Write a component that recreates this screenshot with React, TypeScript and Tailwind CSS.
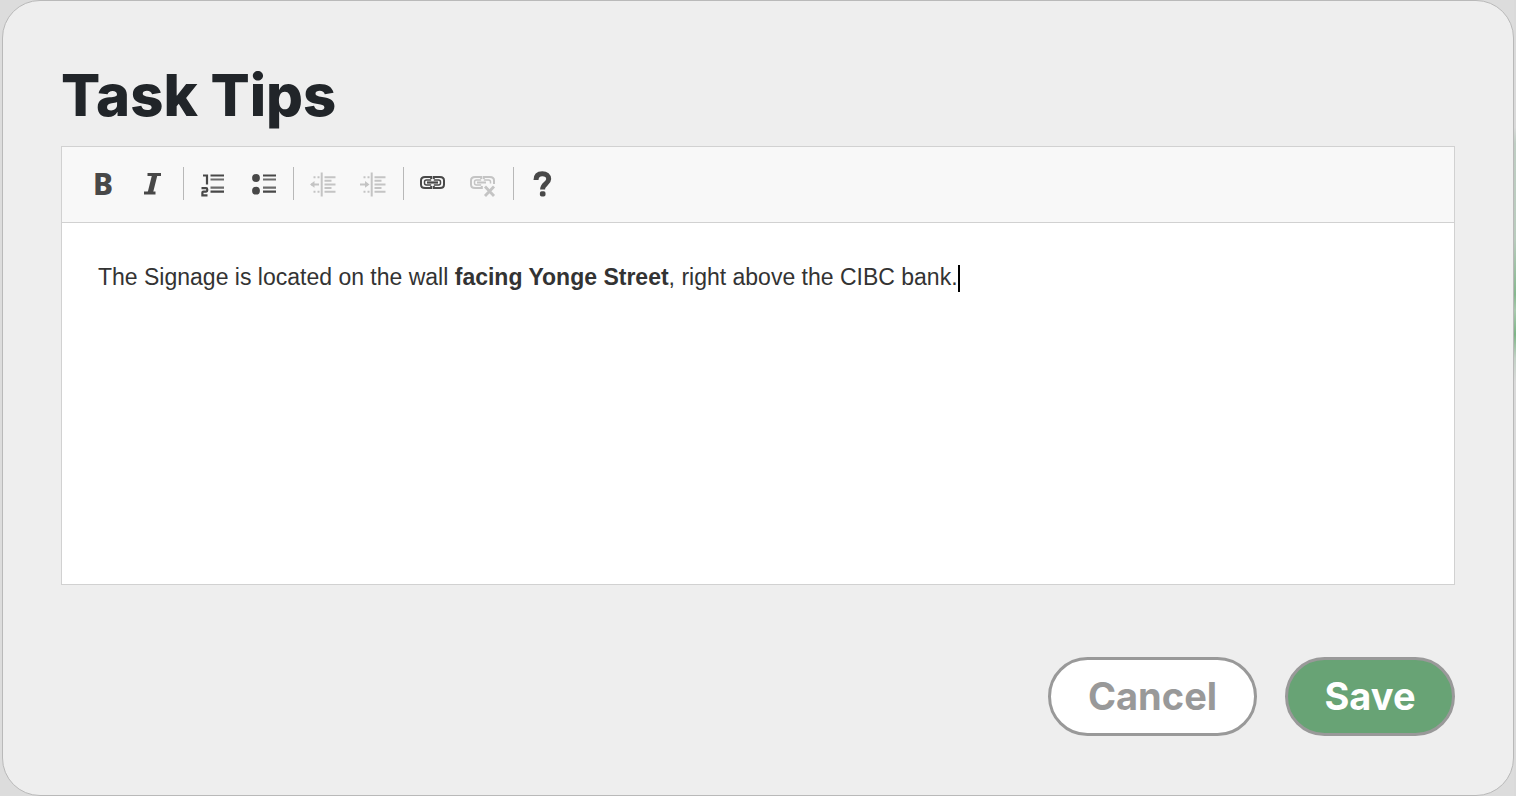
import type { ReactNode } from "react";

type ToolProps = { label: string; disabled?: boolean; children: ReactNode };

function Tool({ label, disabled, children }: ToolProps) {
  return (
    <button
      type="button"
      aria-label={label}
      title={label}
      disabled={disabled}
      className="flex h-8 w-[50px] items-center justify-center text-[#484848] disabled:text-[#c4c4c4]"
    >
      {children}
    </button>
  );
}

function Icon({ children }: { children: ReactNode }) {
  return (
    <svg viewBox="0 0 32 32" className="size-8" fill="none" stroke="currentColor" strokeWidth="2" aria-hidden="true">
      {children}
    </svg>
  );
}

function Separator() {
  return <span role="separator" className="mr-1 ml-[5px] h-[33px] w-px bg-[#b8b8b8]" />;
}

function Toolbar() {
  return (
    <div role="toolbar" aria-label="Formatting" className="flex h-[76px] items-center border-b border-[#d1d1d1] bg-[#f8f8f8] px-4 pb-0.5">
      <Tool label="Bold">
        <span className="font-['Noto_Sans',sans-serif] text-[30px] leading-8 font-extrabold">B</span>
      </Tool>
      <Tool label="Italic">
        <Icon>
          <path d="M10.500 6.500h13.500M7 25h11.500" strokeWidth="3" />
          <path d="M17.700 7l-4.500 18" strokeWidth="5.200" />
        </Icon>
      </Tool>
      <Separator />
      <Tool label="Numbered list">
        <Icon>
          <path d="M6 7.500h4v9" strokeWidth="2.200" />
          <path d="M4.500 20.200h4.700q1 0 1 1v1.400q0 1-1 1H6.400q-1 0-1 1v2.800H10.500" strokeWidth="2.200" />
          <path d="M13.500 7.500H27M13.500 23.700H27" strokeWidth="2.200" />
          <path d="M13.500 11.500H27M13.500 19.700H27" strokeWidth="2.200" opacity=".8" />
        </Icon>
      </Tool>
      <Tool label="Bulleted list">
        <Icon>
          <circle cx="9" cy="10" r="3.900" fill="currentColor" stroke="none" />
          <circle cx="9" cy="22.700" r="3.900" fill="currentColor" stroke="none" />
          <path d="M16 7.500h13M16 23.700h13" strokeWidth="2.200" />
          <path d="M16 11.500h13M16 19.700h13" strokeWidth="2.200" opacity=".8" />
        </Icon>
      </Tool>
      <Separator />
      <Tool label="Decrease indent" disabled>
        <Icon>
          <path d="M14.700 4.500v24M17.500 9.300h11M17.500 12.800h7M17.500 16.400h11M17.500 20h7M17.500 23.700h11M6.500 9.300h2M10.500 9.300h2M6.500 23.700h2M10.500 23.700h2M4 16.400h8" />
          <path d="M7.500 13v6.800L3 16.400z" fill="currentColor" stroke="none" />
        </Icon>
      </Tool>
      <Tool label="Increase indent" disabled>
        <Icon>
          <path d="M14.700 4.500v24M17.500 9.300h11M17.500 12.800h7M17.500 16.400h11M17.500 20h7M17.500 23.700h11M6.500 9.300h2M10.500 9.300h2M6.500 23.700h2M10.500 23.700h2M3 16.400h8" />
          <path d="M8 13v6.800l4.500-3.400z" fill="currentColor" stroke="none" />
        </Icon>
      </Tool>
      <Separator />
      <Tool label="Link">
        <Icon>
          <path d="M14.200 11V9H8Q4 9 4 12.500v4Q4 20 8 20h6.200v-2M16.800 11V9H23q4 0 4 3.500v4q0 3.500-4 3.500h-6.200v-2" />
          <path d="M14.200 12H9.500q-2 0-2 2v1q0 2 2 2h4.700M16.800 12h4.700q2 0 2 2v1q0 2-2 2h-4.700" strokeWidth="1.500" />
          <path d="M10 14.500h11" strokeWidth="2.200" />
        </Icon>
      </Tool>
      <Tool label="Unlink" disabled>
        <Icon>
          <path d="M14.200 11V9H8Q4 9 4 12.500v4Q4 20 8 20h6.800v-2M16.800 11V9H23q4 0 4 3.500v3.500" />
          <path d="M14.200 12H9.500q-2 0-2 2v1q0 2 2 2h4.700M16.800 12h4.700q2 0 2 2v1.500" strokeWidth="1.500" />
          <path d="M10 14.500h9" />
          <path d="M18 18.500l9 9.500M27 18.500l-9 9.500" strokeWidth="2.800" />
        </Icon>
      </Tool>
      <Separator />
      <Tool label="Help">
        <Icon>
          <path d="M9 12C9 7.800 11.300 5.700 15.300 5.700c4 0 6.400 2 6.400 5.300 0 4.600-6.100 4.700-6.100 10.500" strokeWidth="5" />
          <rect x="12.900" y="23.200" width="5.600" height="5.400" rx="1.800" fill="currentColor" stroke="none" />
        </Icon>
      </Tool>
    </div>
  );
}

export default function App() {
  return (
    <main className="flex min-h-screen flex-col bg-[#dcdcdc] bg-[linear-gradient(#dadada_16%,#bfcdc3_18%,#b9cbbd_30%,#86b78e_37%,#a9c9ae_39%,#7db486_42%,#c3d1c6_45%,#dadada_48%)] bg-[length:2px_100%] bg-right bg-no-repeat pr-0.5 pl-0.5 font-['Liberation_Sans',sans-serif]">
      <section
        role="dialog"
        aria-labelledby="tips-title"
        className="flex grow flex-col rounded-[38px] border border-[#b9b9b9] bg-[#eeeeee] px-[58px] pt-[58px] pb-[59px]"
      >
        <h1 id="tips-title" className="font-['Inter',sans-serif] text-[58px] leading-[72px] font-extrabold text-[#212529]">
          Task Tips
        </h1>
        <div className="mt-[15px] border border-[#d1d1d1] bg-white">
          <Toolbar />
          <div
            role="textbox"
            aria-multiline="true"
            aria-label="Task tips"
            contentEditable
            suppressContentEditableWarning
            className="h-[361px] px-9 py-9 text-[23px] leading-9 text-[#333333] outline-none"
          >
            <p>
              The Signage is located on the wall <strong>facing Yonge Street</strong>, right above the CIBC bank.
              <span className="inline-block h-[27px] w-0.5 bg-black align-middle" />
            </p>
          </div>
        </div>
        <div className="mt-[72px] flex justify-end gap-7 font-['Inter',sans-serif] text-[38px] leading-[73px] font-bold">
          <button type="button" className="w-[209px] rounded-full border-[3px] border-[#999999] bg-white text-[#999999]">
            Cancel
          </button>
          <button type="button" className="w-[170px] rounded-full border-[3px] border-[#999999] bg-[#68a375] text-white">
            Save
          </button>
        </div>
      </section>
    </main>
  );
}
